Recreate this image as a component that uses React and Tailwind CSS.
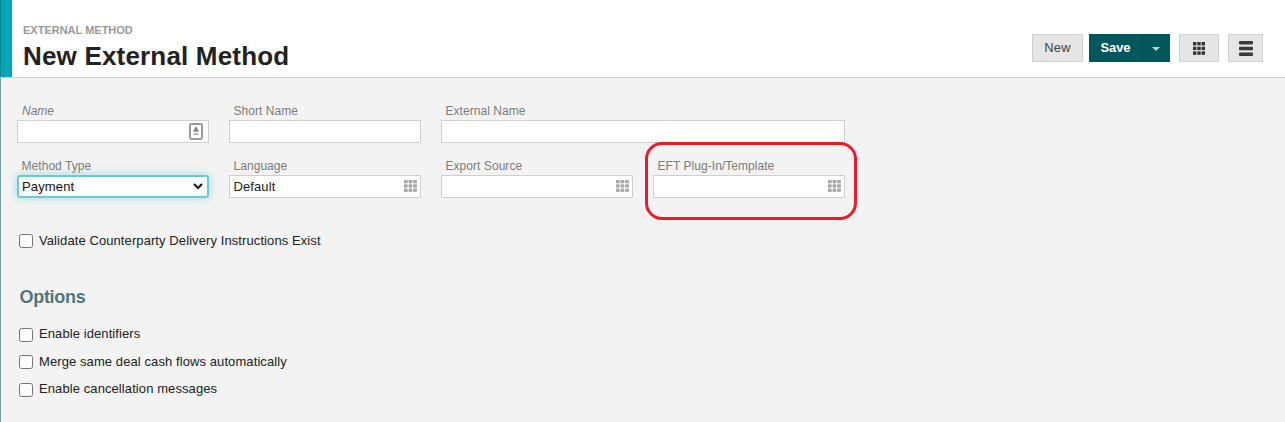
const dots = [0, 1, 2];

function GridIcon({ className, cell, step, size, rowCell, rowStep, h }) {
  return (
    <svg className={className} width={size} height={h} viewBox={`0 0 ${size} ${h}`} fill="currentColor" aria-hidden="true">
      {dots.map((r) =>
        dots.map((c) => <rect key={`${r}${c}`} x={c * step} y={r * rowStep} width={cell} height={rowCell} />)
      )}
    </svg>
  );
}

function SmallGrid() {
  return <GridIcon className="mb-px text-[#a8a8a8]" size={13} h={12} cell={3.7} step={4.6} rowCell={3.3} rowStep={4.3} />;
}

function Field({ label, value, icon, width = "w-[192px]", italic }) {
  return (
    <div className={width}>
      <div className={`h-[18px] pt-px pl-[5px] text-[12px] leading-[17px] whitespace-nowrap text-[#7c7c7c] ${italic ? "italic" : "-ml-[0.5px] tracking-[0.05px]"}`}>
        {label}
      </div>
      <div className="flex h-[23px] items-center justify-between border border-[#cfcfcf] bg-white pr-[3px] pl-[3.5px] text-[13px] leading-[21px] tracking-[0.1px] text-[#222]">
        <span>{value}</span>
        {icon}
      </div>
    </div>
  );
}

function Check({ label, className = "", up = "" }) {
  return (
    <label className={`flex h-[14px] items-center gap-[6px] ${className}`}>
      <span className="size-[14px] shrink-0 rounded-[2.5px] border border-[#767676] bg-white" />
      <span className={`text-[13px] leading-[14px] tracking-[0.09px] whitespace-nowrap text-[#222] ${up}`}>{label}</span>
    </label>
  );
}

export default function App() {
  return (
    <div className="flex h-[422px] w-[1285px] flex-col overflow-hidden bg-[#f3f3f3] font-['Liberation_Sans',Arial,sans-serif]">
      <header className="flex h-[78px] shrink-0 border-b border-[#cfcfcf] bg-white">
        <div className="h-[77px] w-3 border-l border-[#0d8791] bg-[#00a5b8]" />
        <div className="flex-1 pt-[23px] pl-[11px]">
          <div className="text-[11px] leading-[14px] font-bold whitespace-nowrap text-[#999]">EXTERNAL METHOD</div>
          <h1 className="mt-[4px] text-[26px] leading-[30px] font-bold tracking-[0.18px] whitespace-nowrap text-[#222]">New External Method</h1>
        </div>
        <div className="mt-[34px] mr-[22px] flex h-7 text-[13px]">
          <button className="w-[51px] border border-[#cfcfcf] bg-[#e6e6e6] pb-px tracking-[0.2px] text-[#444]">New</button>
          <div className="ml-[6px] flex w-[81px] bg-[#00575c] text-white">
            <button className="w-[54px] border-r border-[#004a50] pb-px font-bold tracking-[-0.1px]">Save</button>
            <button className="flex flex-1 items-center justify-center pt-[2px] pr-[2px]">
              <svg width="8" height="4" viewBox="0 0 8 4" fill="#b9d3d5"><path d="M0 0H8L4 4Z" /></svg>
            </button>
          </div>
          <button className="ml-[9px] flex w-10 items-center justify-center border border-[#cfcfcf] bg-[#e6e6e6]">
            <GridIcon className="text-[#333]" size={12} h={13} cell={3.4} step={4.3} rowCell={3.4} rowStep={4.7} />
          </button>
          <button className="ml-[9px] flex w-[35px] items-center justify-center border border-[#cfcfcf] bg-[#e6e6e6]">
            <svg width="14" height="15" viewBox="0 0 14 15" fill="#3a3a3a">
              <rect y="0" width="14" height="3.4" rx="1" />
              <rect y="5.8" width="14" height="3.4" rx="1" />
              <rect y="11.6" width="14" height="3.4" rx="1" />
            </svg>
          </button>
        </div>
      </header>

      <main className="flex-1 border-l border-[#74a0a3] pt-[24px] pl-[16px]">
        <div className="flex gap-5">
          <Field
            label="Name"
            italic
            icon={
              <svg className="mr-[2px]" width="14" height="17" viewBox="0 0 14 17" fill="none">
                <rect x="1" y="1" width="12" height="15" rx="1.5" stroke="#9b9b9b" strokeWidth="2" />
                <path d="M7 3.5L8.5 5.5V6.3L9.5 7V8.8H4.5V7L5.5 6.3V5.5Z" fill="#858585" />
                <rect x="4.5" y="10" width="5" height="2" fill="#b5b5b5" />
              </svg>
            }
          />
          <Field label="Short Name" />
          <Field label="External Name" width="w-[404px]" />
        </div>

        <div className="mt-[14px] flex gap-5">
          <div className="w-[192px]">
            <div className="-ml-[0.5px] h-[18px] pt-px pl-[5px] text-[12px] leading-[17px] tracking-[0.05px] whitespace-nowrap text-[#7c7c7c]">Method Type</div>
            <div className="flex h-[23px] items-center justify-between rounded-[3px] border-2 border-[#68ccd4] bg-white pr-[4px] pl-[3px] text-[13px] leading-[19px] tracking-[0.15px] text-[#111] shadow-[0_0_8px_rgba(0,165,184,0.35)]">
              <span>Payment</span>
              <svg width="10" height="7" viewBox="0 0 10 7" fill="none" stroke="#111" strokeWidth="2"><path d="M1 1L5 5L9 1" /></svg>
            </div>
          </div>
          <Field label="Language" value="Default" icon={<SmallGrid />} />
          <Field label="Export Source" icon={<SmallGrid />} />
          <div className="relative">
            <Field label="EFT Plug-In/Template" icon={<SmallGrid />} />
            <div className="absolute top-[-15px] left-[-8px] h-[78px] w-[212px] rounded-[17px] border-3 border-[#ed1c24]" />
          </div>
        </div>

        <Check className="mt-[36px] ml-[2px]" label="Validate Counterparty Delivery Instructions Exist" />

        <h2 className="mt-[38px] ml-[2.5px] text-[18px] leading-[22px] font-bold tracking-[-0.3px] text-[#4f777b]">Options</h2>

        <div className="mt-[20px] ml-[2px]">
          <Check label="Enable identifiers" up="pb-[2px]" />
          <Check className="mt-[13px]" label="Merge same deal cash flows automatically" />
          <Check className="mt-[14px]" label="Enable cancellation messages" up="pb-[2px]" />
        </div>
      </main>
    </div>
  );
}
